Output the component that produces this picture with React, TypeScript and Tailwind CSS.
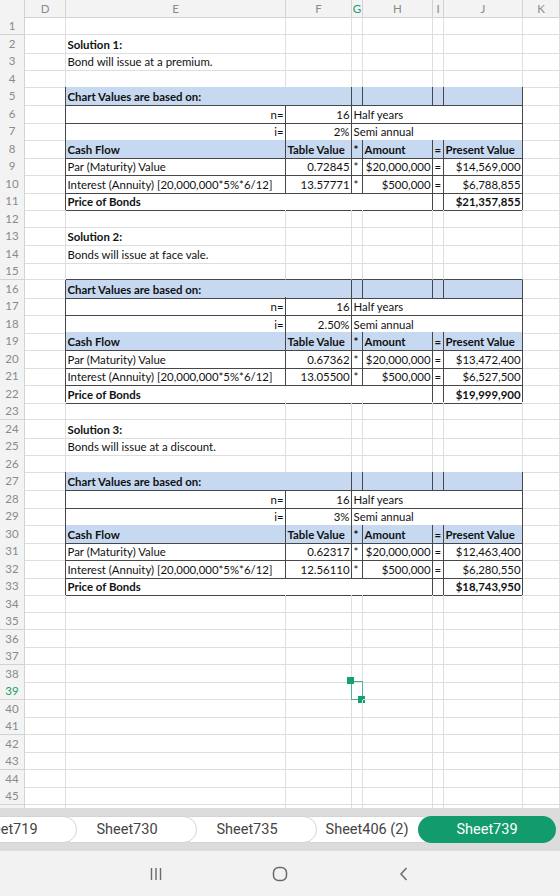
import React from 'react';

type Cell = {
  t?: string;
  span?: number;
  b?: boolean;
  r?: boolean;
  c?: boolean;
  fill?: boolean;
  dr?: boolean;
  db?: boolean;
};

type Block = {
  start: number;
  i: string;
  rows: [string, string, string][];
  total: string;
};

const blocks: Block[] = [
  {
    start: 5,
    i: '2%',
    rows: [
      ['0.72845', '$20,000,000', '$14,569,000'],
      ['13.57771', '$500,000', '$6,788,855'],
    ],
    total: '$21,357,855',
  },
  {
    start: 16,
    i: '2.50%',
    rows: [
      ['0.67362', '$20,000,000', '$13,472,400'],
      ['13.05500', '$500,000', '$6,527,500'],
    ],
    total: '$19,999,900',
  },
  {
    start: 27,
    i: '3%',
    rows: [
      ['0.62317', '$20,000,000', '$12,463,400'],
      ['12.56110', '$500,000', '$6,280,550'],
    ],
    total: '$18,743,950',
  },
];

const notes: Record<number, { t: string; b?: boolean }> = {
  2: { t: 'Solution 1:', b: true },
  3: { t: 'Bond will issue at a premium.' },
  13: { t: 'Solution 2:', b: true },
  14: { t: 'Bonds will issue at face vale.' },
  24: { t: 'Solution 3:', b: true },
  25: { t: 'Bonds will issue at a discount.' },
};

const COLS = ['D', 'E', 'F', 'G', 'H', 'I', 'J', 'K'];
const ROWS = Array.from({ length: 46 }, (_, i) => i + 1);
const SEL_ROW = 39;

const box = (x: Cell): Cell => ({ dr: true, db: true, ...x });

function cellsFor(n: number): Cell[] {
  const blk = blocks.find((x) => n >= x.start - 1 && n <= x.start + 6);
  if (!blk) {
    const note = notes[n];
    return [{}, note ? { t: note.t, b: note.b } : {}, {}, {}, {}, {}, {}, {}];
  }
  const k = n - blk.start;
  if (k === -1) {
    return [{}, { db: true }, { db: true }, { db: true }, { db: true }, { db: true }, { db: true }, {}];
  }
  const d: Cell = { dr: true };
  switch (k) {
    case 0:
      return [
        d,
        box({ t: 'Chart Values are based on:', span: 2, b: true, fill: true }),
        box({ fill: true }),
        box({ fill: true }),
        box({ fill: true }),
        box({ fill: true }),
        {},
      ];
    case 1:
      return [d, box({ t: 'n=', r: true }), box({ t: '16', r: true }), box({ t: 'Half years', span: 4 }), {}];
    case 2:
      return [d, box({ t: 'i=', r: true }), box({ t: blk.i, r: true }), box({ t: 'Semi annual', span: 4 }), {}];
    case 3:
      return [
        d,
        box({ t: 'Cash Flow', b: true, fill: true }),
        box({ t: 'Table Value', b: true, fill: true }),
        box({ t: '*', b: true, fill: true }),
        box({ t: 'Amount', b: true, fill: true }),
        box({ t: '=', b: true, fill: true }),
        box({ t: 'Present Value', b: true, fill: true }),
        {},
      ];
    case 4:
    case 5: {
      const [tv, amt, pv] = blk.rows[k - 4];
      return [
        d,
        box({ t: k === 4 ? 'Par (Maturity) Value' : 'Interest (Annuity) [20,000,000*5%*6/12]' }),
        box({ t: tv, r: true }),
        box({ t: '*' }),
        box({ t: amt, r: true }),
        box({ t: '=' }),
        box({ t: pv, r: true }),
        {},
      ];
    }
    default:
      return [
        d,
        box({ t: 'Price of Bonds', span: 4, b: true }),
        box({}),
        box({ t: blk.total, r: true, b: true }),
        {},
      ];
  }
}

const spanCls: Record<number, string> = { 1: '', 2: 'col-span-2', 4: 'col-span-4' };
const GRID = 'grid grid-cols-[25px_41px_220px_66px_11px_70px_11px_79px_1fr]';

function GridCell({ cell, selected }: { cell: Cell; selected?: boolean }) {
  return (
    <div
      className={[
        'relative flex items-center whitespace-nowrap px-[1.5px] pt-[1px] border-r border-b',
        spanCls[cell.span ?? 1],
        cell.dr ? 'border-r-[#474747]' : 'border-r-[#dedede]',
        cell.db ? 'border-b-[#474747]' : 'border-b-[#dedede]',
        cell.fill ? 'bg-[#c6d9f1]' : '',
        cell.r ? 'justify-end' : '',
        cell.b ? 'font-bold' : '',
      ].join(' ')}
    >
      {cell.t}
      {selected && (
        <>
          <div className="absolute -left-px -top-px w-[12px] h-[18.5px] border border-[#4fb48f]" />
          <div className="absolute -left-[5px] -top-[5px] w-[7px] h-[7px] bg-[#16a06e]" />
          <div className="absolute left-[6px] top-[13.5px] w-[7px] h-[7px] bg-[#16a06e]" />
        </>
      )}
    </div>
  );
}

function Sheet() {
  return (
    <div className="h-[808px] overflow-hidden bg-white text-[11.4px] text-[#111] font-['Lato',sans-serif]">
      <div className={`${GRID} h-[17px] bg-[#f3f3f3] text-[#8a8a8a] text-[11.5px]`}>
        <div className="border-r border-b border-[#d2d2d2]" />
        {COLS.map((c) => (
          <div
            key={c}
            className={`flex items-center justify-center border-r border-b border-[#d2d2d2] ${
              c === 'G' ? 'text-[#14a06c]' : ''
            }`}
          >
            {c}
          </div>
        ))}
      </div>
      {ROWS.map((n) => (
        <div key={n} className={`${GRID} h-[17.5px]`}>
          <div
            className={`flex items-center justify-center bg-[#f3f3f3] border-r border-b border-[#d2d2d2] text-[11.5px] ${
              n === SEL_ROW ? 'text-[#14a06c]' : 'text-[#8a8a8a]'
            }`}
          >
            {n}
          </div>
          {cellsFor(n).map((cell, i) => (
            <GridCell key={i} cell={cell} selected={n === SEL_ROW && i === 3} />
          ))}
        </div>
      ))}
    </div>
  );
}

const tabs = [
  { name: 'Sheet719', z: 'z-40', first: true },
  { name: 'Sheet730', z: 'z-30' },
  { name: 'Sheet735', z: 'z-20' },
  { name: 'Sheet406 (2)', z: 'z-10' },
];

function Tabs() {
  return (
    <div className="h-[43px] bg-[#dcdcdc] flex items-center overflow-hidden font-['Roboto',sans-serif] text-[14.5px]">
      {tabs.map((t) => (
        <div
          key={t.name}
          className={`relative ${t.z} ${t.first ? '-ml-[63px]' : '-ml-[20px]'} shrink-0 w-[140px] h-[27px] flex items-center justify-center rounded-full bg-white border border-[#d3d3d3] text-[#444]`}
        >
          {t.name}
        </div>
      ))}
      <div className="relative z-50 -ml-[19px] shrink-0 w-[138px] h-[27px] flex items-center justify-center rounded-full bg-[#129b6c] text-white">
        Sheet739
      </div>
    </div>
  );
}

function NavBar() {
  return (
    <div className="h-[45px] bg-[#f2f2f2] flex items-center justify-center text-[#6a6a6a]">
      <div className="w-[124px] flex justify-center">
        <svg width="14" height="14" viewBox="0 0 14 14" fill="none" stroke="currentColor" strokeWidth="1.4">
          <path d="M2.5 1v12M7 1v12M11.5 1v12" />
        </svg>
      </div>
      <div className="w-[124px] flex justify-center">
        <svg width="16" height="16" viewBox="0 0 16 16" fill="none" stroke="currentColor" strokeWidth="1.5">
          <rect x="1.5" y="1.5" width="13" height="13" rx="5" />
        </svg>
      </div>
      <div className="w-[124px] flex justify-center">
        <svg width="10" height="16" viewBox="0 0 10 16" fill="none" stroke="currentColor" strokeWidth="1.5">
          <path d="M7.5 2L2 8l5.5 6" />
        </svg>
      </div>
    </div>
  );
}

export default function App() {
  return (
    <div className="w-[560px] h-[896px] flex flex-col overflow-hidden bg-white">
      <Sheet />
      <Tabs />
      <NavBar />
    </div>
  );
}
